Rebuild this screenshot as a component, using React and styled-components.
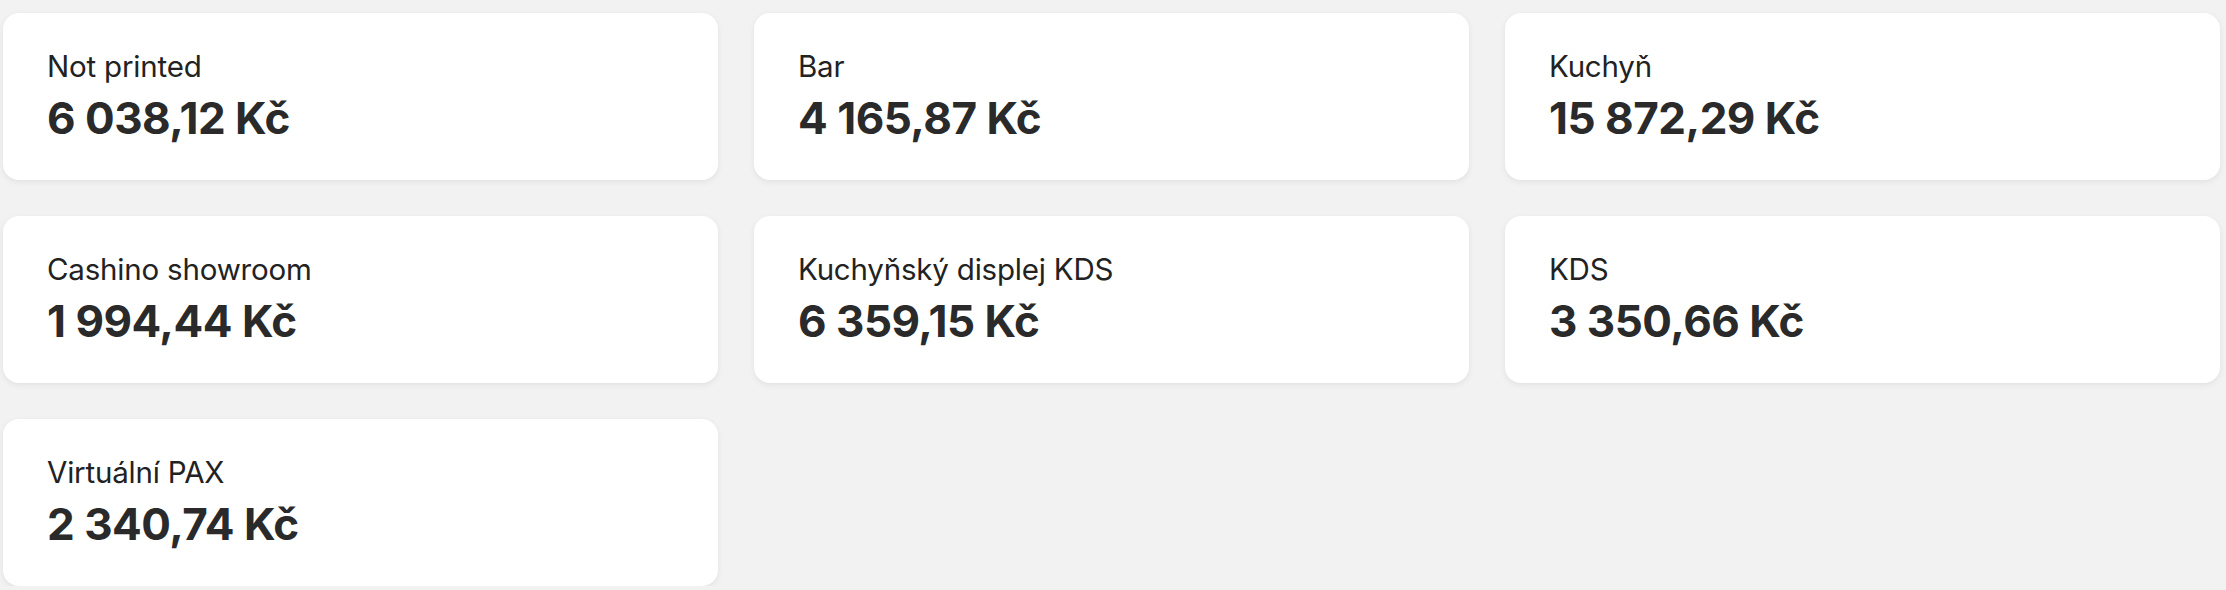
import React from "react";
import styled, { createGlobalStyle } from "styled-components";

const Global = createGlobalStyle`
  html, body { margin: 0; padding: 0; background: #f2f2f2; }
  body { font-family: Inter, "Noto Sans", sans-serif; }
`;

const Grid = styled.div`
  display: grid;
  grid-template-columns: repeat(3, 715px);
  column-gap: 36px;
  row-gap: 36px;
  padding: 13px 0 0 3px;
`;

const Card = styled.div`
  background: #ffffff;
  border-radius: 16px;
  box-shadow: 0 2px 6px rgba(0, 0, 0, 0.07);
  padding: 35px 44px 36px;
  display: flex;
  flex-direction: column;
  gap: 8px;
`;

const Label = styled.div`
  font-size: 29.5px;
  line-height: 36px;
  font-weight: 400;
  color: #222222;
  letter-spacing: -0.2px;
`;

const Value = styled.div`
  font-size: 44px;
  line-height: 52px;
  font-weight: 650;
  color: #2a2a2a;
  letter-spacing: -0.5px;
`;

const items = [
  ["Not printed", "6 038,12 Kč"],
  ["Bar", "4 165,87 Kč"],
  ["Kuchyň", "15 872,29 Kč"],
  ["Cashino showroom", "1 994,44 Kč"],
  ["Kuchyňský displej KDS", "6 359,15 Kč"],
  ["KDS", "3 350,66 Kč"],
  ["Virtuální PAX", "2 340,74 Kč"],
];

export default function App() {
  return (
    <>
      <Global />
      <Grid>
        {items.map(([l, v]) => (
          <Card key={l}>
            <Label>{l}</Label>
            <Value>{v}</Value>
          </Card>
        ))}
      </Grid>
    </>
  );
}
